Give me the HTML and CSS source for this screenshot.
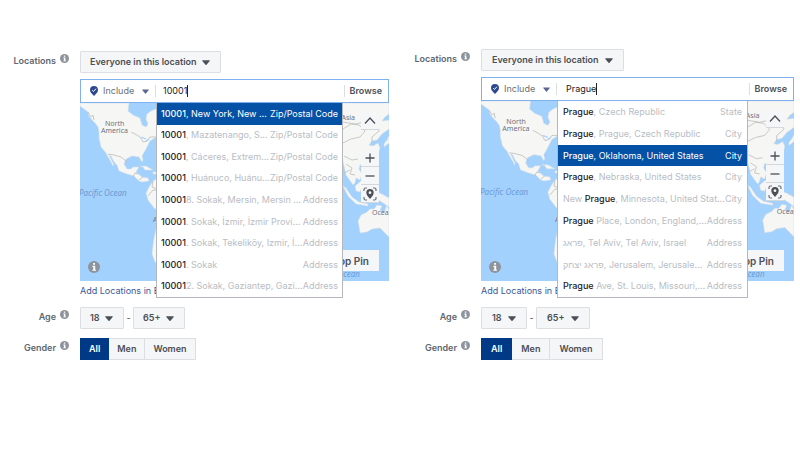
FILE: index.html
```html
<!DOCTYPE html>
<html lang="en">
<head>
<meta charset="utf-8">
<title>Audience locations</title>
<link rel="stylesheet" href="styles.css">
</head>
<body>
<svg class="defs" aria-hidden="true">
  <symbol id="info" viewBox="0 0 10 10"><circle cx="5" cy="5" r="5" fill="#8d949e"/><path d="M4.300 1.700h1.500v1.400H4.300zM3.700 4h2.300v3.200h.7v.9H3.600v-.9h.8V4.900h-.7z" fill="#fff"/></symbol>
  <symbol id="caret" viewBox="0 0 8 5"><path d="M.6.3h6.8q.6 0 .3.6L4.500 4.700q-.5.5-1 0L.3.9Q0 .3.6.3z" fill="currentColor"/></symbol>
  <symbol id="pin-check" viewBox="0 0 8 10"><path d="M4 0a4 4 0 0 1 4 4c0 2.300-2 4-4 6C2 8 0 6.300 0 4a4 4 0 0 1 4-4z" fill="#2d4a91"/><path d="M2.200 4.200l1.300 1.300 2.400-2.800" fill="none" stroke="#fff" stroke-width="1"/></symbol>
  <symbol id="up" viewBox="0 0 18 18"><path d="M4 11.500 9 6l5 5.500" fill="none" stroke="#4b4f56" stroke-width="1.300"/></symbol>
  <symbol id="plus" viewBox="0 0 18 18"><path d="M4.500 9h9M9 4.500v9" fill="none" stroke="#4b4f56" stroke-width="1.300"/></symbol>
  <symbol id="minus" viewBox="0 0 18 18"><path d="M4.500 9h9" fill="none" stroke="#4b4f56" stroke-width="1.300"/></symbol>
  <symbol id="locate" viewBox="0 0 18 18"><path d="M6 3H4.500Q3 3 3 4.500V6M12 3h1.500Q15 3 15 4.500V6M3 12v1.500Q3 15 4.500 15H6M15 12v1.500q0 1.500-1.500 1.500H12" fill="none" stroke="#6b7078" stroke-width="1.200"/><path fill-rule="evenodd" d="M9 4a3.700 3.700 0 0 1 3.700 3.700C12.700 10 10.500 12 9 14 7.500 12 5.300 10 5.300 7.700A3.700 3.700 0 0 1 9 4zm0 2.300a1.400 1.400 0 1 0 0 2.800 1.400 1.400 0 0 0 0-2.800z" fill="#4b4f56"/></symbol>
  <symbol id="world" viewBox="0 0 309 178">
    <path fill="#a3d1fd" d="M0 0h309v178H0z"/>
    <g fill="#f6f6f4" stroke="#d3dce4" stroke-width=".5">
      <path d="M0 0v3l4 3 4 3 1 4 3 4 3 3 3 4 1 5v6l2 9 5 6 2 4 3 5 2 4 1-1-3-6-2-4 2 1 3 6 3 3 2 6 8 3 7 2 5 5 3 1 7-1-1-3-6-1-6-5 3-5-6 0-2 2-4 0-3-5 2-5 6-3 7 1 3 5 1-2-1-4 4-7 4-8 8-5V5l-7 3-4 3-1 5 2 5-2 3-4-2-2-7-7-3-5-4 1-8z"/>
      <path d="M80 74l-7 4-4 6-3 6 2 7 6 8 6 4z"/>
      <path d="M80 124l-4 2-2 9-1 7-1 9 3 8 5 4z"/>
      <path d="M250 0h59v11l-4 3-3 4 7-1v9l-7 5-5 6-5 1-3 4 4 1 5-3 2 5-2 7-5 6-8 3-5 1-1 4 3 5-2 6-4-2-1 5-2 2-7-10z"/>
      <path d="M279 123l-1-5 3-6 6-3 3-3 4 0 3-4 5 1-2 4 4 3 3-8 2 6v26l-5-5-4-4-8 1-5 3-7 1z"/>
      <path d="M263 83l3 2 6 9 7 5 9 2v2l-12-2-8-8zM275 83l6-5 2 4-3 7-4-1zM286 89l3-3-1 4 2 4-3 1zM297 89l5 2 7 4v9l-6-4-6-4zM287 72l3 4 2 6-3-3z"/>
      <path d="M60 63l6 0 7 4-8 0-2-3zM73 69l4 0 0 2-4 0z"/>
      <path d="M309 33l-2 4-3 4v3l5-4z"/>
    </g>
    <path d="M28 51l6 1 7 2 6 5M51 29l6 3 4 3 2 4 4-1 3-4h8M8 9l3 5 2-2 1 5M53 74l2-4 3 1M59 77l4-3M68 93l5-6 4 0M73 78l-1 6 8 3M263 26l8-5 8 1 6 6-5 6-9 2-8 4M263 19l12 2 14-3 9 4 1 6-7 6 0 6M264 53l8 4 6-1M266 61l6 4-2 6 5 1M264 70l6-3" fill="none" stroke="#bcbcba" stroke-width=".8"/>
    <path d="M61 34l5 2M66 38l3-2" stroke="#a3d1fd" stroke-width="1.200"/>
    <g class="land-names"><text x="25" y="23">North</text><text x="21" y="30">America</text><text x="73" y="119">America</text><text x="275" y="17" text-anchor="end">Asia</text><text x="292" y="112">Oceania</text></g>
    <g class="sea-names"><text x="-1" y="93">Pacific Ocean</text><text x="280" y="174" text-anchor="end">Indian Ocean</text></g>
  </symbol>
</svg>

<main class="page">
  <form class="panel zip">
    <div class="row locations">
      <div class="label"><label for="scope-a">Locations</label><svg class="info"><use href="#info"/></svg></div>
      <div class="field">
        <span class="pick"><select id="scope-a"><option>Everyone in this location</option></select><svg class="caret"><use href="#caret"/></svg></span>
        <div class="finder">
          <div class="search">
            <svg class="pin"><use href="#pin-check"/></svg>
            <span class="mode"><select aria-label="Include or exclude"><option>Include</option></select><svg class="caret"><use href="#caret"/></svg></span>
            <span class="entry"><input type="text" aria-label="Add locations" value="10001" size="5"><i class="cursor"></i></span>
            <button type="button" class="browse">Browse</button>
          </div>
          <div class="map">
            <svg class="world" viewBox="0 0 309 178"><use href="#world"/></svg>
            <button type="button" class="tool up" aria-label="Collapse map"><svg><use href="#up"/></svg></button>
            <div class="tools">
              <button type="button" class="tool" aria-label="Zoom in"><svg><use href="#plus"/></svg></button>
              <button type="button" class="tool" aria-label="Zoom out"><svg><use href="#minus"/></svg></button>
              <button type="button" class="tool" aria-label="Locate"><svg><use href="#locate"/></svg></button>
            </div>
            <svg class="map-info"><use href="#info"/></svg>
            <button type="button" class="drop-pin">Drop Pin</button>
            <ul class="results">
              <li class="active"><span><b>10001</b>, New York, New Y…</span><em>Zip/Postal Code</em></li>
              <li><span><b>10001</b>, Mazatenango, S…</span><em>Zip/Postal Code</em></li>
              <li><span><b>10001</b>, Cáceres, Extrem…</span><em>Zip/Postal Code</em></li>
              <li><span><b>10001</b>, Huánuco, Huánu…</span><em>Zip/Postal Code</em></li>
              <li><span><b>10001</b>8. Sokak, Mersin, Mersin …</span><em>Address</em></li>
              <li><span><b>10001</b>. Sokak, İzmir, İzmir Provin…</span><em>Address</em></li>
              <li><span><b>10001</b>. Sokak, Tekeliköy, Izmir, İ…</span><em>Address</em></li>
              <li><span><b>10001</b>. Sokak</span><em>Address</em></li>
              <li><span><b>10001</b>2. Sokak, Gaziantep, Gazi…</span><em>Address</em></li>
            </ul>
          </div>
        </div>
        <a class="bulk" href="#">Add Locations in Bulk</a>
      </div>
    </div>
    <div class="row">
      <div class="label"><label for="min-a">Age</label><svg class="info"><use href="#info"/></svg></div>
      <div class="field ages">
        <span class="pick"><select id="min-a"><option>18</option></select><svg class="caret"><use href="#caret"/></svg></span>
        <span class="dash">-</span>
        <span class="pick"><select aria-label="Maximum age"><option>65+</option></select><svg class="caret"><use href="#caret"/></svg></span>
      </div>
    </div>
    <div class="row">
      <div class="label"><span id="gender-a">Gender</span><svg class="info"><use href="#info"/></svg></div>
      <div class="field genders" role="radiogroup" aria-labelledby="gender-a">
        <label><input type="radio" name="gender" checked><span>All</span></label>
        <label><input type="radio" name="gender"><span>Men</span></label>
        <label><input type="radio" name="gender"><span>Women</span></label>
      </div>
    </div>
  </form>

  <form class="panel city">
    <div class="row locations">
      <div class="label"><label for="scope-b">Locations</label><svg class="info"><use href="#info"/></svg></div>
      <div class="field">
        <span class="pick"><select id="scope-b"><option>Everyone in this location</option></select><svg class="caret"><use href="#caret"/></svg></span>
        <div class="finder">
          <div class="search">
            <svg class="pin"><use href="#pin-check"/></svg>
            <span class="mode"><select aria-label="Include or exclude"><option>Include</option></select><svg class="caret"><use href="#caret"/></svg></span>
            <span class="entry"><input type="text" aria-label="Add locations" value="Prague" size="6"><i class="cursor"></i></span>
            <button type="button" class="browse">Browse</button>
          </div>
          <div class="map">
            <svg class="world" viewBox="0 0 309 178"><use href="#world"/></svg>
            <button type="button" class="tool up" aria-label="Collapse map"><svg><use href="#up"/></svg></button>
            <div class="tools">
              <button type="button" class="tool" aria-label="Zoom in"><svg><use href="#plus"/></svg></button>
              <button type="button" class="tool" aria-label="Zoom out"><svg><use href="#minus"/></svg></button>
              <button type="button" class="tool" aria-label="Locate"><svg><use href="#locate"/></svg></button>
            </div>
            <svg class="map-info"><use href="#info"/></svg>
            <button type="button" class="drop-pin">Drop Pin</button>
            <ul class="results">
              <li><span><b>Prague</b>, Czech Republic</span><em>State</em></li>
              <li><span><b>Prague</b>, Prague, Czech Republic</span><em>City</em></li>
              <li class="active"><span><b>Prague</b>, Oklahoma, United States</span><em>City</em></li>
              <li><span><b>Prague</b>, Nebraska, United States</span><em>City</em></li>
              <li><span>New <b>Prague</b>, Minnesota, United Stat…</span><em>City</em></li>
              <li><span><b>Prague</b> Place, London, England,…</span><em>Address</em></li>
              <li><span><bdi>פראג</bdi>, Tel Aviv, Tel Aviv, Israel</span><em>Address</em></li>
              <li><span><bdi>פראג יצחק</bdi>, Jerusalem, Jerusale…</span><em>Address</em></li>
              <li><span><b>Prague</b> Ave, St. Louis, Missouri, …</span><em>Address</em></li>
            </ul>
          </div>
        </div>
        <a class="bulk" href="#">Add Locations in Bulk</a>
      </div>
    </div>
    <div class="row">
      <div class="label"><label for="min-b">Age</label><svg class="info"><use href="#info"/></svg></div>
      <div class="field ages">
        <span class="pick"><select id="min-b"><option>18</option></select><svg class="caret"><use href="#caret"/></svg></span>
        <span class="dash">-</span>
        <span class="pick"><select aria-label="Maximum age"><option>65+</option></select><svg class="caret"><use href="#caret"/></svg></span>
      </div>
    </div>
    <div class="row">
      <div class="label"><span id="gender-b">Gender</span><svg class="info"><use href="#info"/></svg></div>
      <div class="field genders" role="radiogroup" aria-labelledby="gender-b">
        <label><input type="radio" name="gender" checked><span>All</span></label>
        <label><input type="radio" name="gender"><span>Men</span></label>
        <label><input type="radio" name="gender"><span>Women</span></label>
      </div>
    </div>
  </form>
</main>
</body>
</html>
```
FILE: styles.css
```css
* { box-sizing: border-box; }
body {
  margin: 0;
  background: #fff;
  color: #4b4f56;
  font: 9px/14px Inter, "Liberation Sans", sans-serif;
}
button, select, input { font: inherit; color: inherit; margin: 0; padding: 0; border: 0; background: none; }
select { appearance: none; }
svg { display: block; }
.defs { position: absolute; width: 0; height: 0; }

.page { display: grid; grid-template-columns: 1fr 1fr; }
.panel { display: flex; flex-direction: column; gap: 9px; min-width: 0; }
.zip { padding: 51px 11px 0 0; }
.city { padding: 49px 6px 0 1px; }

.row { display: grid; grid-template-columns: 80px minmax(0, 1fr); }
.label {
  display: flex;
  align-items: flex-start;
  justify-content: flex-end;
  gap: 4px;
  padding: 3px 11px 0 0;
  font-weight: 600;
  color: #606770;
}
.info { width: 9px; height: 9px; }

.pick {
  position: relative;
  display: inline-flex;
  align-items: center;
  background: #f5f6f7;
  border: 1px solid #dcdee2;
  border-radius: 1px;
  height: 22px;
  color: #4b4f56;
}
.pick select { font-weight: 600; height: 20px; padding: 0 23px 0 9px; }
.city .pick select { padding: 0 24px 0 10px; }
.caret { position: absolute; right: 10px; width: 8px; height: 5px; pointer-events: none; }

.locations .field { display: flex; flex-direction: column; align-items: flex-start; }
.finder { align-self: stretch; margin-top: 6px; }
.search {
  display: flex;
  align-items: center;
  height: 24px;
  border: 1px solid #7fb1ee;
  padding: 0 6px 0 9px;
}
.pin { width: 8px; height: 10px; margin-right: 5px; }
.mode { position: relative; display: flex; align-items: center; border-right: 1px solid #dcdee2; color: #6b7078; }
.mode select { height: 12px; line-height: 12px; padding-right: 20px; }
.mode .caret { right: 6px; width: 7px; height: 5px; color: #5a6690; }
.entry { display: flex; flex: 1; align-items: center; padding-left: 7px; color: #1d2129; }
.city .entry { padding-left: 9px; }
.entry input { field-sizing: content; height: 14px; outline: 0; }
.cursor { width: 1px; height: 12px; background: #1d2129; }
.browse { border-left: 1px solid #dcdee2; padding-left: 5px; height: 12px; line-height: 12px; font-weight: 600; }

.map { position: relative; }
.world { width: 100%; height: auto; }
.land-names { font: 7px "Noto Sans", sans-serif; fill: #6e7380; }
.sea-names { font: italic 8px "Noto Sans", sans-serif; fill: #6c9bd4; }
.tool { display: block; width: 18px; height: 18px; background: #f5f6f7; border-bottom: 1px solid #d4d7dc; }
.tool svg { width: 18px; height: 18px; }
.up { position: absolute; top: 9px; right: 10px; }
.tools { position: absolute; top: 46px; right: 10px; }
.map-info { position: absolute; left: 8px; bottom: 8px; width: 12px; height: 12px; }
.drop-pin {
  position: absolute;
  right: 10px;
  bottom: 10px;
  height: 21px;
  padding: 0 10px;
  background: #f5f6f7;
  font-size: 10px;
  font-weight: 600;
}

.results {
  position: absolute;
  z-index: 1;
  top: 0;
  bottom: -17px;
  left: 76px;
  right: 46px;
  display: grid;
  grid-template-columns: minmax(0, 1fr);
  grid-auto-rows: 1fr;
  margin: 0;
  padding: 0;
  list-style: none;
  background: #fff;
  border: 1px solid #b4b7bc;
  border-top: 0;
}
.results li { display: flex; align-items: center; padding: 0 4px; color: #b8bdc4; min-height: 0; }
.city .results li { padding: 0 5px; }
.results span { flex: 1; min-width: 0; overflow: hidden; text-overflow: ellipsis; white-space: nowrap; }
.results em { font-style: normal; white-space: nowrap; }
.results b { font-weight: 500; color: #1d2129; }
.results .active { background: #0451a5; color: #fff; }
.results .active b { color: #fff; }

.bulk { color: #385898; text-decoration: none; margin: 3px 0 0; }
.ages { display: flex; align-items: center; }
.dash { width: 9px; text-align: center; }
.genders { display: flex; }
.genders label { position: relative; display: block; border: 1px solid #dcdee2; border-left: 0; background: #f5f6f7; font-weight: 600; line-height: 20px; }
.genders label:first-child { border-left: 1px solid #dcdee2; }
.genders input { position: absolute; inset: 0; opacity: 0; }
.genders span { display: block; padding: 0 8px; }
.city .genders span { padding: 0 9px; }
.genders label:has(:checked) { background: #003a87; border-color: #003a87; color: #fff; }
```
